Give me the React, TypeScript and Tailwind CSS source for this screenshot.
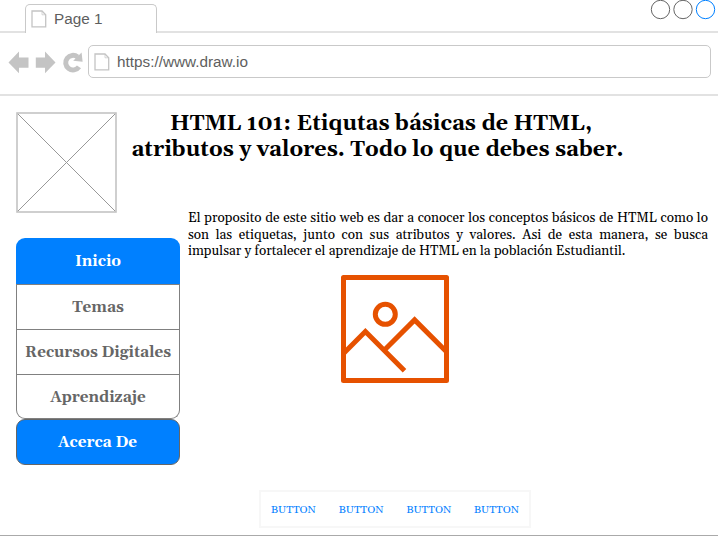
function PageIcon({ className }: { className: string }) {
  return (
    <svg className={className} viewBox="0 0 16 18" fill="none" stroke="#c4c4c4" strokeWidth="1.3">
      <path d="M1 1H11L14.7 4.8V16.8H1Z" />
      <path d="M11 1V4.8H14.7" strokeWidth="0.7" />
    </svg>
  );
}

function NavIcons() {
  return (
    <svg className="mt-[-3px] h-[30px] w-[80px] shrink-0" viewBox="0 0 80 30" fill="#c4c4c4">
      <path d="M0.5 15.4L11 4.6V10.6H20.5V20.7H11V26.2Z" />
      <path d="M47.5 15.4L37 4.6V10.6H27.8V20.7H37V26.2Z" />
      <path
        d="M71 19.8A7.3 7.3 0 1 1 69.6 10"
        fill="none"
        stroke="#c4c4c4"
        strokeWidth="5"
      />
      <path d="M73.6 5.6L74.6 14.8L65.2 13.7Z" />
    </svg>
  );
}

function Chrome() {
  return (
    <header className="font-['Liberation_Sans',sans-serif] text-[15.3px] text-[#5e5e5e]">
      <div className="flex h-[33px] items-end">
        <div className="w-[25px] border-b-2 border-[#e2e2e2]" />
        <div className="flex h-[29px] w-[132px] items-center rounded-t-[5px] border border-b-0 border-[#c9c9c9] pl-[5px]">
          <PageIcon className="h-[18px] w-[16px]" />
          <span className="ml-[7px] leading-none">Page 1</span>
        </div>
        <div className="flex flex-1 flex-col items-end border-b-2 border-[#e2e2e2]">
          <svg className="mb-[11px] h-[20px] w-[70px]" viewBox="0 0 70 20" fill="none" strokeWidth="1">
            <circle cx="12.5" cy="9.5" r="9.2" stroke="#666" />
            <circle cx="35" cy="9.5" r="9.2" stroke="#666" />
            <circle cx="57.5" cy="9.5" r="9.2" stroke="#0080ff" />
          </svg>
        </div>
      </div>
      <div className="flex h-[63px] items-center border-b-2 border-[#e2e2e2] pr-[7px] pl-2">
        <NavIcons />
        <div className="mt-[-5px] flex h-[33px] flex-1 items-center rounded-[5px] border border-[#c9c9c9] pt-px pl-[5px]">
          <PageIcon className="h-[18px] w-[16px]" />
          <span className="mt-px ml-[7px] leading-none">https://www.draw.io</span>
        </div>
      </div>
    </header>
  );
}

function Menu() {
  const items = ["Temas", "Recursos Digitales", "Aprendizaje"];
  return (
    <nav className="mt-[25px] w-[164px] text-center text-[15.3px] leading-[46px] font-bold text-[#666]">
      <div className="h-[46px] rounded-t-[9px] bg-[#0080ff] pt-px text-white">Inicio</div>
      <div className="rounded-b-[9px] border border-t-0 border-[#808080]">
        {items.map((label) => (
          <div key={label} className="h-[45px] border-t border-[#808080] last:h-[44px]">
            {label}
          </div>
        ))}
      </div>
      <div className="h-[46px] rounded-[9px] border border-[#666] bg-[#0080ff] pr-px text-white">Acerca De</div>
    </nav>
  );
}

export default function App() {
  return (
    <div className="flex h-[536px] w-[718px] flex-col overflow-hidden border-b border-[#aaa] bg-white font-['Gelasio','Liberation_Serif',serif] text-black">
      <Chrome />
      <main className="flex h-[394px] shrink-0 pt-4 pl-4">
        <div className="w-[172px] shrink-0">
          <svg className="h-[101px] w-[101px]" viewBox="0 0 101 101" fill="none">
            <path d="M1 1L100 100M100 1L1 100" stroke="#999" />
            <rect x="1" y="1" width="99" height="99" stroke="#c4c4c4" strokeWidth="1.6" />
          </svg>
          <Menu />
        </div>
        <div className="w-[520px]">
          <h1 className="-mt-px -ml-[69px] w-[520px] text-center text-[21.6px] leading-[26px] font-bold [font-variant-numeric:oldstyle-nums]">
            <span className="block pl-[4px]">HTML 101: Etiqutas básicas de HTML,</span>
            <span className="block pr-[3px]">atributos y valores. Todo lo que debes saber.</span>
          </h1>
          <p className="mt-[47px] text-justify text-[13.5px] leading-[16.5px]">
            El proposito de este sitio web es dar a conocer los conceptos básicos de HTML como lo son las etiquetas,
            junto con sus atributos y valores. Asi de esta manera, se busca impulsar y fortalecer el aprendizaje de
            HTML en la población Estudiantil.
          </p>
          <svg
            className="mt-[15px] ml-[153px] h-[108px] w-[108px]"
            viewBox="0 0 108 108"
            fill="none"
            stroke="#e65100"
            strokeWidth="5"
          >
            <rect x="2.5" y="2.5" width="103" height="103" strokeLinejoin="round" />
            <circle cx="44.3" cy="39.3" r="10" />
            <path d="M3 78L24.4 56.6L63.5 95.7M44 74.5L73.6 44.9L105 76.3" />
          </svg>
        </div>
      </main>
      <footer className="ml-[259px] flex h-[38px] w-[272px] items-center justify-between border-2 border-[#f7f7f7] pt-[2px] pr-[10px] pl-[10px] text-[10.8px] text-[#0080ff]">
        <span>BUTTON</span>
        <span>BUTTON</span>
        <span>BUTTON</span>
        <span>BUTTON</span>
      </footer>
    </div>
  );
}
